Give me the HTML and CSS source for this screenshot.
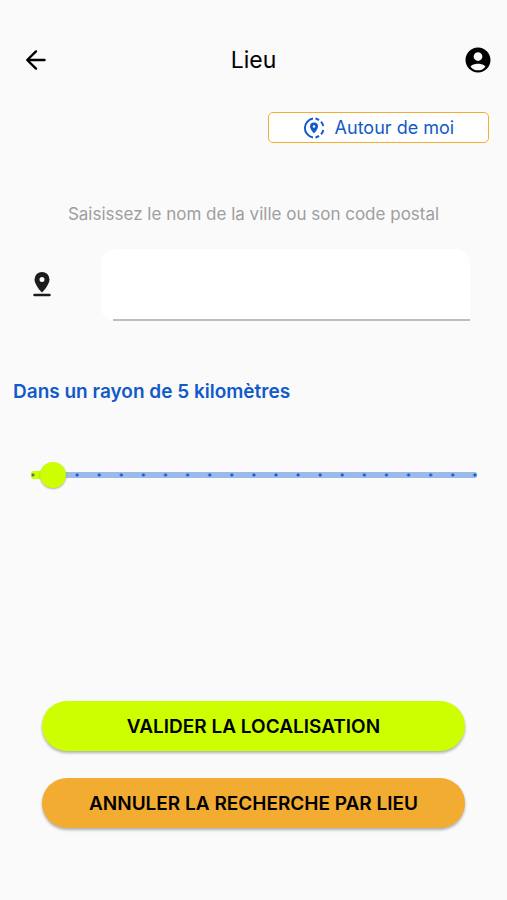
FILE: index.html
```
<!DOCTYPE html>
<html lang="fr">
<head>
    <meta charset="UTF-8">
    <meta name="viewport" content="width=device-width, initial-scale=1">
    <title>Lieu</title>
    <link rel="stylesheet" href="styles.css">
</head>
<body>
    <header class="topbar">
        <button class="icon-btn back" type="button" aria-label="Retour">
            <svg width="22" height="22" viewBox="0 0 22 22" fill="none" stroke="#000" stroke-width="2.4" stroke-linecap="round" stroke-linejoin="round">
                <path d="M19.500 11H2.500M11 2.400L2.200 11l8.800 8.600"/>
            </svg>
        </button>
        <h1 class="title">Lieu</h1>
        <button class="icon-btn account" type="button" aria-label="Mon compte">
            <svg width="30" height="30" viewBox="0 0 24 24">
                <path d="M12 2C6.48 2 2 6.48 2 12s4.48 10 10 10 10-4.48 10-10S17.52 2 12 2zm0 3.7a3.5 3.5 0 1 1 0 7 3.5 3.5 0 0 1 0-7zm0 14.5c-2.500 0-4.600-1.100-5.900-2.900.6-1.500 3.400-2.300 5.900-2.300s5.300.8 5.900 2.300c-1.300 1.800-3.400 2.900-5.900 2.900z"/>
            </svg>
        </button>
    </header>
    <main class="content">
        <button class="around" type="button">
            <svg width="22" height="22" viewBox="0 0 22 22" fill="none" stroke="#1259c9" stroke-width="2">
                <path d="M10 1.600A9.500 9.500 0 0 0 10 20.400M12.500 1.600Q14.500 2 16 3.100M18 4.600Q19.700 6.400 20.300 9M20.300 13Q19.700 15.600 18 17.400M16 18.900Q14.500 20 12.500 20.400"/>
                <path fill="#1259c9" stroke="none" fill-rule="evenodd" d="M11 5.500a4 4 0 0 0-4 4c0 2.800 4 6.800 4 6.800s4-4 4-6.800a4 4 0 0 0-4-4zm0 2.700a1.300 1.300 0 1 1 0 2.600 1.300 1.300 0 0 1 0-2.600z"/>
            </svg>
            <span>Autour de moi</span>
        </button>
        <label class="hint" for="city">Saisissez le nom de la ville ou son code postal</label>
        <div class="field">
            <svg class="pin" width="30" height="30" viewBox="0 0 24 24" fill="#1c1c1c">
                <path fill-rule="evenodd" d="M12 1.500a6 6 0 0 0-6 6c0 4.400 6 10.500 6 10.500S18 11.900 18 7.500a6 6 0 0 0-6-6zm0 4a2 2 0 1 1 0 4 2 2 0 0 1 0-4z"/>
                <rect x="5" y="19" width="14" height="2" rx="1"/>
            </svg>
            <div class="input-box">
                <input class="city" id="city" type="text">
            </div>
        </div>
        <label class="radius" for="radius">Dans un rayon de 5 kilomètres</label>
        <div class="slider">
            <div class="track"></div>
            <input class="range" id="radius" type="range" min="0.5" max="100" step="0.5" value="5">
        </div>
    </main>
    <footer class="actions">
        <button class="action validate" type="button">VALIDER LA LOCALISATION</button>
        <button class="action cancel" type="button">ANNULER LA RECHERCHE PAR LIEU</button>
    </footer>
</body>
</html>
```
FILE: styles.css
```
*{
    box-sizing: border-box;
    margin: 0;
    padding: 0;
}
body{
    min-height: 100vh;
    padding: 40px 0 72px;
    display: flex;
    flex-direction: column;
    background: #fafafa;
    color: #000;
    font-family: Inter, "Liberation Sans", sans-serif;
    font-size: 18px;
}
button,
input{
    font: inherit;
    border: 0;
    outline: 0;
}
button{
    cursor: pointer;
}
svg{
    display: block;
    flex: none;
}
.topbar{
    display: grid;
    grid-template-columns: 54px 1fr 54px;
    align-items: center;
    height: 40px;
    padding: 0 9px;
}
.icon-btn{
    display: flex;
    align-items: center;
    justify-content: center;
    width: 40px;
    height: 40px;
    background: none;
}
.back{
    width: 54px;
}
.account{
    justify-self: end;
}
.title{
    font-size: 23px;
    font-weight: 400;
    text-align: center;
}
.content{
    display: flex;
    flex-direction: column;
    padding: 32px 13px 0;
}
.around{
    display: flex;
    align-items: center;
    justify-content: center;
    gap: 10px;
    align-self: flex-end;
    width: 46%;
    height: 31px;
    margin-right: 5px;
    background: #fff;
    border: 1px solid #f3ac32;
    border-radius: 5px;
    color: #1259c9;
}
.hint{
    margin-top: 60px;
    font-size: 17px;
    line-height: 22px;
    color: #9e9e9e;
    text-align: center;
}
.field{
    display: flex;
    align-items: center;
    gap: 44px;
    margin-top: 24px;
    padding: 0 24px 0 14px;
}
.input-box{
    flex: 1;
    padding-left: 12px;
    background: #fff;
    border-radius: 14px 14px 0 14px;
}
.city{
    display: block;
    width: 100%;
    height: 72px;
    background: none;
    border-bottom: 2px solid #bdbdbd;
}
.radius{
    margin-top: 60px;
    font-size: 19px;
    line-height: 22px;
    font-weight: 600;
    color: #1259c9;
}
.slider{
    position: relative;
    margin: 59px 6px 0 7px;
}
.range{
    position: relative;
    display: block;
    width: 100%;
    height: 26px;
    background: none;
    -webkit-appearance: none;
    appearance: none;
}
.range::-webkit-slider-thumb{
    -webkit-appearance: none;
    width: 26px;
    height: 26px;
    background: #cdff00;
    border-radius: 50%;
    box-shadow: 0 1px 2px rgba(0,0,0,.3);
}
/* track with one dot every 5 km */
.track{
    position: absolute;
    top: 10px;
    left: 11px;
    right: 11px;
    height: 6px;
    border-radius: 2px;
    background: radial-gradient(circle at 2px 50%, #1259c9 1px, transparent 2px) 0 0 / calc((100% - 4px) / 20) 100% repeat-x, #9bb9e9;
}
.track::before{
    content: "";
    position: absolute;
    top: -1px;
    left: 0;
    width: 20px;
    height: 8px;
    border-radius: 3px;
    background: radial-gradient(circle at 2px 50%, #4a7a50 1px, transparent 2px), #cdff00;
}
.actions{
    display: flex;
    flex-direction: column;
    gap: 27px;
    margin-top: auto;
    padding: 0 42px;
}
.action{
    height: 50px;
    border-radius: 25px;
    box-shadow: 0 2px 3px rgba(0,0,0,.3);
    font-size: 19px;
    font-weight: 600;
}
.validate{
    background: #cdff00;
}
.cancel{
    background: #f3ac32;
}
```
